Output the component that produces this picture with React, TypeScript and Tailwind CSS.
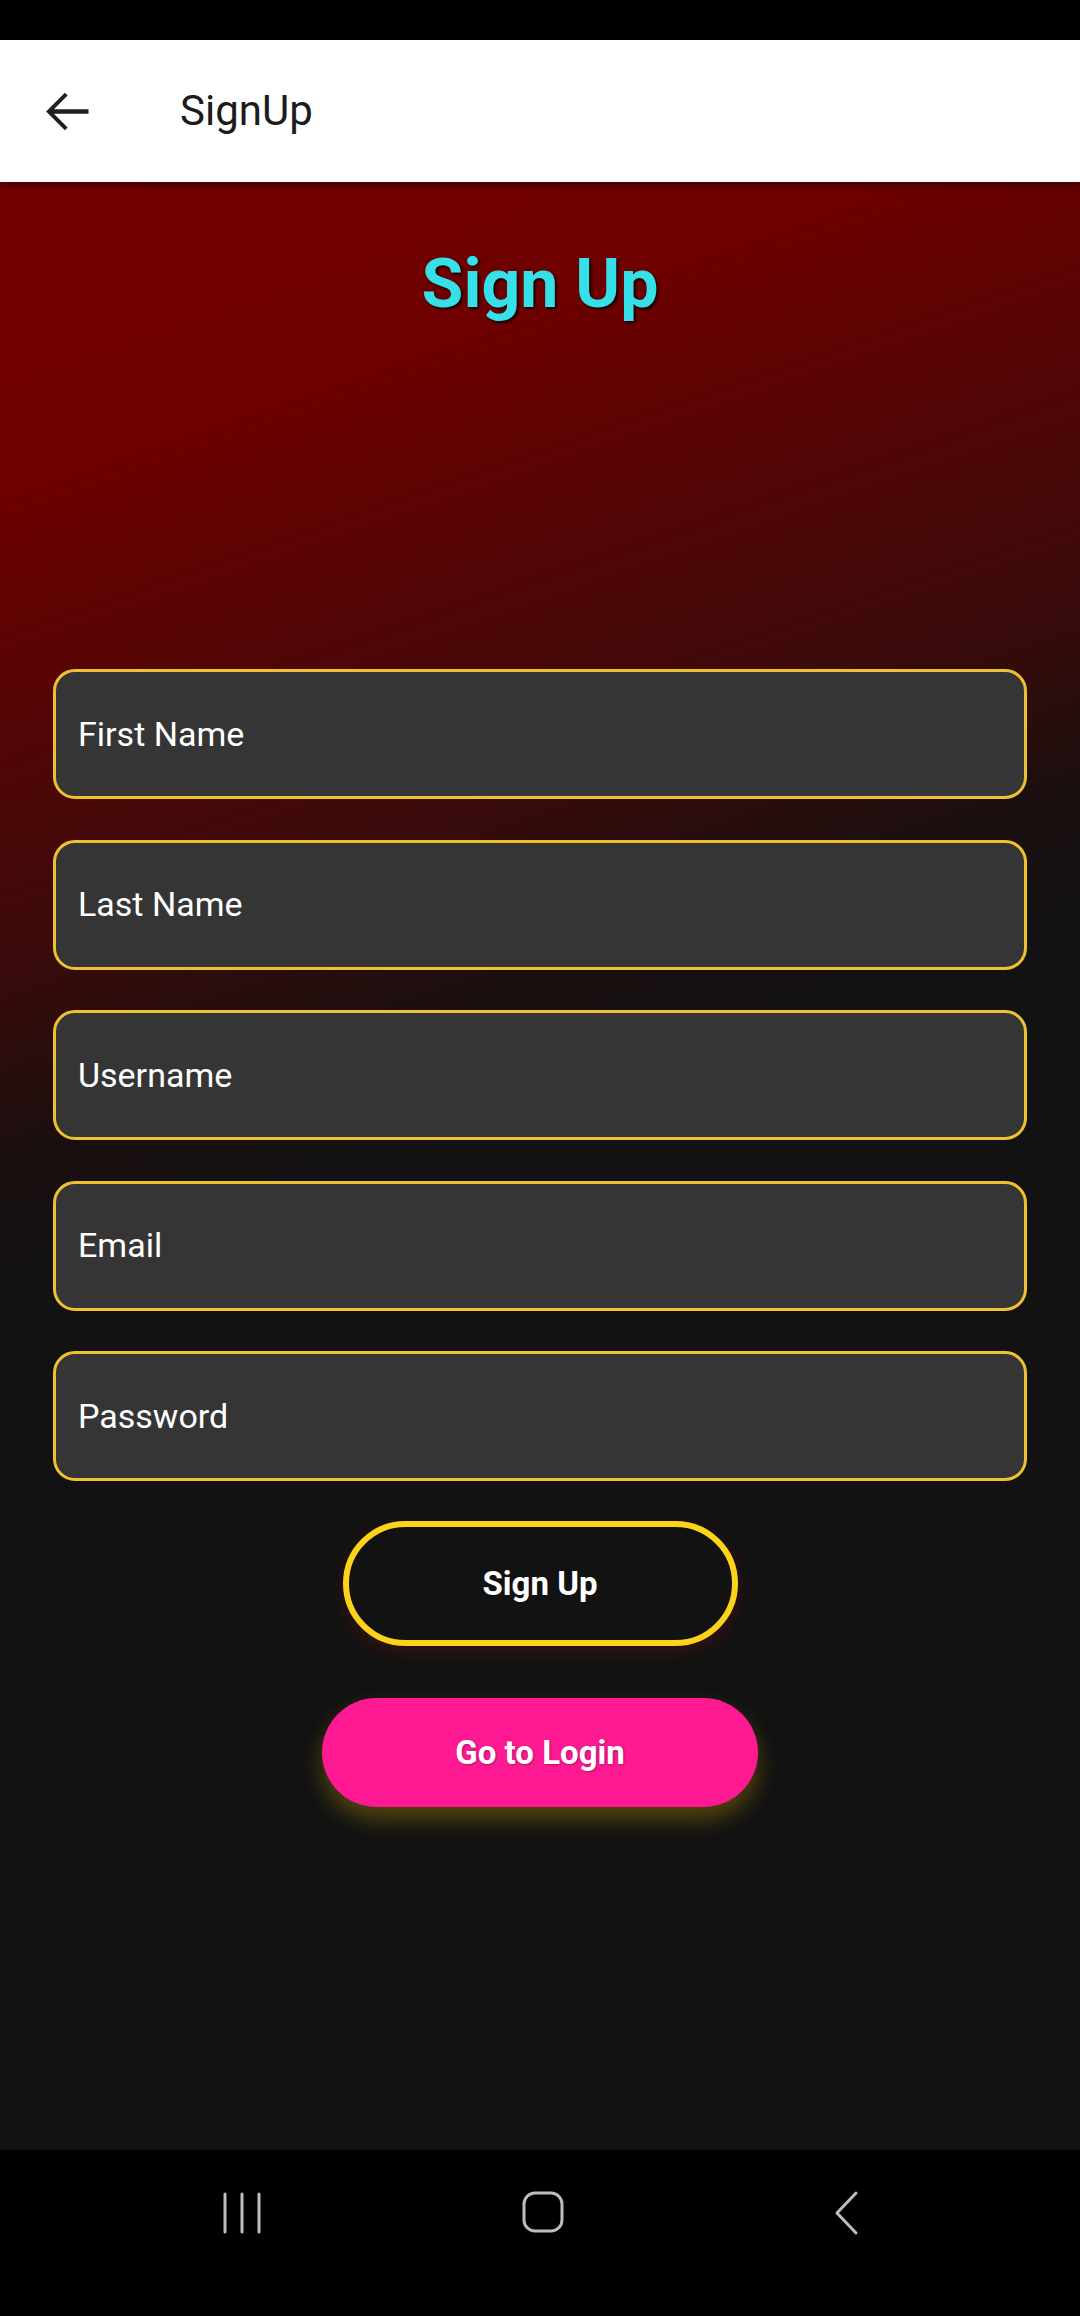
import React from "react";

const fields = ["First Name", "Last Name", "Username", "Email", "Password"];

export default function App() {
  return (
    <div
      className="flex h-[2316px] w-[1080px] flex-col bg-[#121212]"
      style={{ fontFamily: "Roboto, 'Noto Sans', sans-serif" }}
    >
      <div className="h-[40px] w-full bg-black" />
      <div className="relative z-10 flex h-[142px] items-center bg-white shadow-[0_3px_8px_rgba(0,0,0,0.45)]">
        <svg
          viewBox="0 0 24 24"
          className="ml-[36px] h-[63px] w-[63px] shrink-0"
          fill="#1f1f1f"
        >
          <path d="M20 11.15H6.8l5.25-5.25-1.05-1.05-7.15 7.15 7.15 7.15 1.05-1.05-5.25-5.25H20z" />
        </svg>
        <span className="ml-[81px] text-[42px] leading-none text-[#1c1c1c]">
          SignUp
        </span>
      </div>
      <div className="flex flex-1 flex-col bg-[linear-gradient(161deg,#730000_0%,#6e0000_13%,#3c0a0a_33%,#1a0f0f_42%,#121212_48%,#121212_100%)] px-[53px]">
        <h1 className="mt-[62px] text-center text-[68px] font-bold leading-[80px] text-[#35e0e8] [text-shadow:2px_2px_3px_rgba(0,0,0,0.75)]">
          Sign Up
        </h1>
        <div className="mt-[345px] flex flex-col gap-[40.5px]">
          {fields.map((f) => (
            <div
              key={f}
              className="flex h-[130px] items-center rounded-[22px] border-[3px] border-[#eec133] bg-[#353535] pl-[22px] text-[34px] text-white"
            >
              {f}
            </div>
          ))}
        </div>
        <div className="mt-[40px] flex flex-col items-center">
          <div className="flex h-[125px] w-[395px] items-center justify-center rounded-full border-[6px] border-[#fdd21a] bg-[#121212] text-[33px] font-bold text-white shadow-[0_6px_18px_rgba(120,20,20,0.35)]">
            Sign Up
          </div>
          <div className="mt-[52px] flex h-[109px] w-[436px] items-center justify-center rounded-full bg-[#ff1a93] text-[33px] font-bold text-white shadow-[0_12px_22px_rgba(255,200,0,0.28)] [text-shadow:1px_1px_3px_rgba(0,0,0,0.3)]">
            Go to Login
          </div>
        </div>
      </div>
      <div className="relative h-[166px] w-full bg-black">
        <svg
          className="absolute left-[218px] top-[42px]"
          width="48"
          height="42"
          viewBox="0 0 48 42"
        >
          <g stroke="#bdbdbd" strokeWidth="3" strokeLinecap="round">
            <line x1="7" y1="2" x2="7" y2="40" />
            <line x1="24" y1="2" x2="24" y2="40" />
            <line x1="41" y1="2" x2="41" y2="40" />
          </g>
        </svg>
        <svg
          className="absolute left-[521px] top-[40px]"
          width="46"
          height="46"
          viewBox="0 0 46 46"
        >
          <rect
            x="3"
            y="3"
            width="38"
            height="38"
            rx="11"
            fill="none"
            stroke="#bdbdbd"
            strokeWidth="3"
          />
        </svg>
        <svg
          className="absolute left-[830px] top-[40px]"
          width="32"
          height="46"
          viewBox="0 0 32 46"
        >
          <polyline
            points="26,3 7,23 26,43"
            fill="none"
            stroke="#bdbdbd"
            strokeWidth="3"
            strokeLinecap="round"
            strokeLinejoin="round"
          />
        </svg>
      </div>
    </div>
  );
}
